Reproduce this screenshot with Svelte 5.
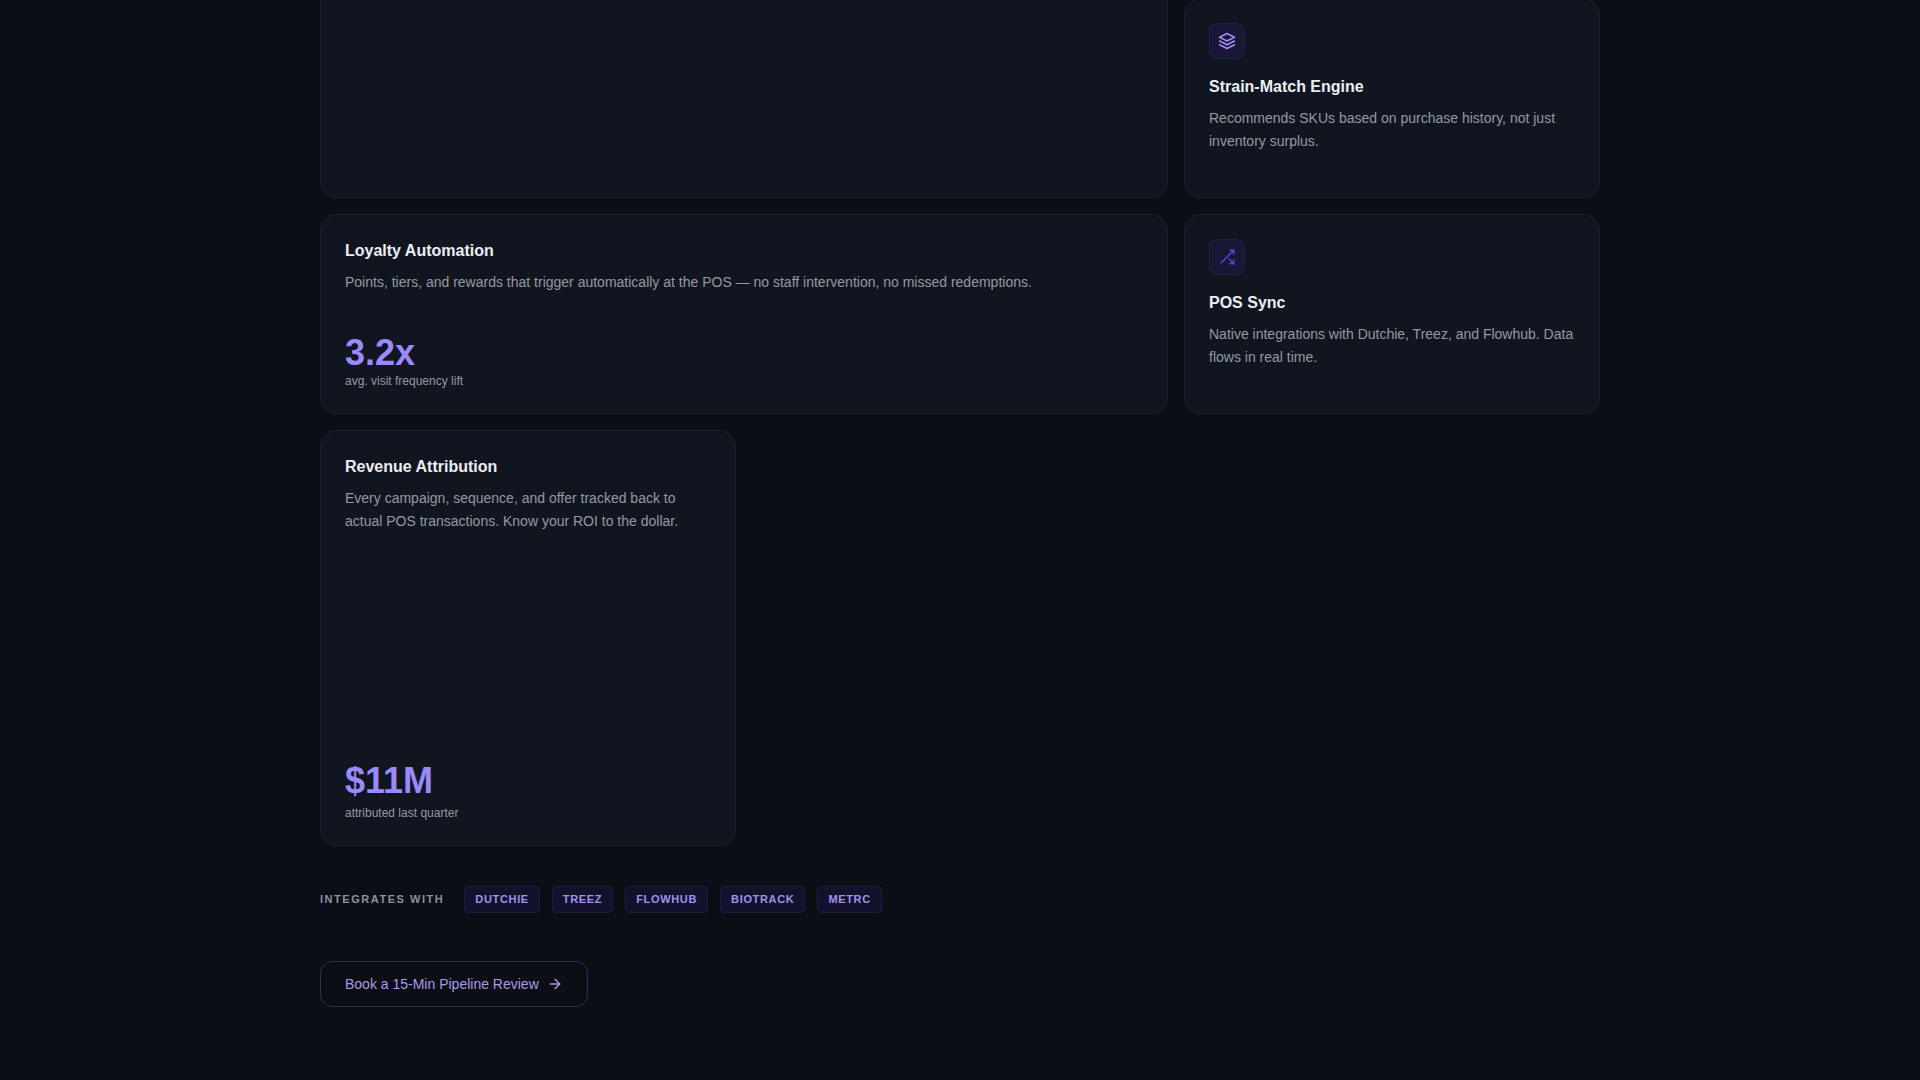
<script lang="ts">
  const integrations = ['Dutchie', 'Treez', 'Flowhub', 'BioTrack', 'Metrc'];
</script>

<main class="page">
  <section class="bento">
    <article class="card hero"></article>
    <article class="card"></article>

    <article class="card">
      <div class="icon-box">
        <svg class="icon" viewBox="0 0 24 24" fill="none" stroke="currentColor" stroke-width="2" stroke-linecap="round" stroke-linejoin="round">
          <path d="M12 2 2 7l10 5 10-5-10-5Z" />
          <path d="m2 17 10 5 10-5" />
          <path d="m2 12 10 5 10-5" />
        </svg>
      </div>
      <h3>Strain-Match Engine</h3>
      <p>Recommends SKUs based on purchase history, not just inventory surplus.</p>
    </article>

    <article class="card wide">
      <h3>Loyalty Automation</h3>
      <p>Points, tiers, and rewards that trigger automatically at the POS — no staff intervention, no missed redemptions.</p>
      <div class="stat">3.2x</div>
      <div class="stat-label">avg. visit frequency lift</div>
    </article>

    <article class="card">
      <div class="icon-box sync">
        <svg class="icon" viewBox="0 0 24 24" fill="none" stroke="currentColor" stroke-width="2" stroke-linecap="round" stroke-linejoin="round">
          <path d="M16 3h5v5" />
          <path d="M4 20 21 3" />
          <path d="M21 16v5h-5" />
          <path d="m15 15 6 6" />
        </svg>
      </div>
      <h3>POS Sync</h3>
      <p>Native integrations with Dutchie, Treez, and Flowhub. Data flows in real time.</p>
    </article>

    <article class="card tall">
      <h3>Revenue Attribution</h3>
      <p>Every campaign, sequence, and offer tracked back to actual POS transactions. Know your ROI to the dollar.</p>
      <div class="stat roomy">$11M</div>
      <div class="stat-label">attributed last quarter</div>
    </article>
  </section>

  <div class="integrations">
    <span class="integrations-label">Integrates with</span>
    {#each integrations as name}
      <span class="chip">{name}</span>
    {/each}
  </div>

  <a class="cta" href="#review">
    Book a 15-Min Pipeline Review
    <svg class="cta-arrow" viewBox="0 0 24 24" fill="none" stroke="currentColor" stroke-width="2" stroke-linecap="round" stroke-linejoin="round">
      <path d="M5 12h14" />
      <path d="m12 5 7 7-7 7" />
    </svg>
  </a>
</main>

<style>
  :global(body) {
    background: #0b0e15;
    font-family: "Liberation Sans", Arial, sans-serif;
  }

  .page {
    width: 1280px;
    margin: -218px auto 0;
    padding-bottom: 73px;
  }

  .bento {
    display: grid;
    grid-template-columns: repeat(3, 1fr);
    grid-auto-rows: 200px;
    gap: 16px;
  }

  .card {
    display: flex;
    flex-direction: column;
    box-sizing: border-box;
    padding: 24px;
    background: #111520;
    border: 1px solid #1d202d;
    border-radius: 16px;
  }

  .hero {
    grid-column: span 2;
    grid-row: span 2;
  }

  .wide {
    grid-column: span 2;
  }

  .tall {
    grid-row: span 2;
  }

  .icon-box {
    display: flex;
    align-items: center;
    justify-content: center;
    box-sizing: border-box;
    width: 36px;
    height: 36px;
    margin-bottom: 16px;
    color: #a78bfa;
    background: #181736;
    border: 1px solid #222145;
    border-radius: 8px;
  }

  .icon-box.sync {
    color: #5b43d6;
  }

  .icon {
    width: 18px;
    height: 18px;
  }

  h3 {
    margin: 0 0 8px;
    font-size: 16px;
    font-weight: 700;
    line-height: 24px;
    color: #eceef3;
  }

  p {
    margin: 0;
    font-size: 14px;
    line-height: 1.65;
    color: #9698a6;
  }

  .stat {
    margin-top: auto;
    margin-bottom: 2px;
    font-size: 36px;
    font-weight: 700;
    line-height: 1;
    color: #9b8afb;
  }

  .stat.roomy {
    margin-bottom: 6px;
  }

  .stat-label {
    font-size: 12px;
    line-height: 16px;
    color: #9698a6;
  }

  .integrations {
    display: flex;
    align-items: center;
    gap: 12px;
    margin-top: 40px;
  }

  .integrations-label {
    margin-right: 8px;
    margin-top: -1px;
    font-size: 11px;
    font-weight: 700;
    letter-spacing: 0.14em;
    text-transform: uppercase;
    color: #8e90a0;
  }

  .chip {
    padding: 6px 10px;
    font-size: 11px;
    font-weight: 700;
    line-height: 13px;
    letter-spacing: 0.06em;
    text-transform: uppercase;
    color: #a093ea;
    background: #12122c;
    border: 1px solid #1c1c40;
    border-radius: 4px;
  }

  .cta {
    display: inline-flex;
    align-items: center;
    gap: 8px;
    box-sizing: border-box;
    height: 46px;
    margin-top: 48px;
    padding: 0 24px;
    font-size: 14px;
    color: #a99be4;
    text-decoration: none;
    border: 1px solid #30304c;
    border-radius: 12px;
  }

  .cta-arrow {
    width: 16px;
    height: 16px;
  }
</style>
